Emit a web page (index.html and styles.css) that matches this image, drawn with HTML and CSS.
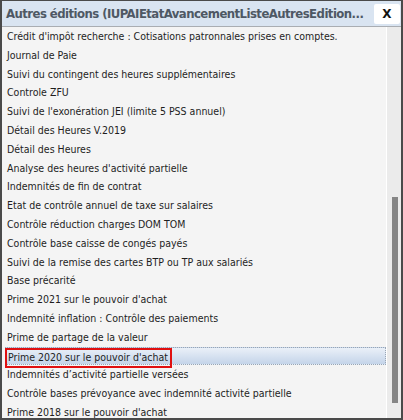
FILE: index.html
```html
<!DOCTYPE html>
<html lang="fr">
<head>
<meta charset="utf-8">
<link rel="stylesheet" href="styles.css">
</head>
<body>
<div class="window">
  <div class="titlebar">
    <div class="title">Autres éditions (IUPAIEtatAvancementListeAutresEdition...</div>
    <div class="close">X</div>
  </div>
  <div class="content">
    <ul class="list">
      <li class="row">Crédit d'impôt recherche : Cotisations patronnales prises en comptes.</li>
      <li class="row">Journal de Paie</li>
      <li class="row">Suivi du contingent des heures supplémentaires</li>
      <li class="row">Controle ZFU</li>
      <li class="row">Suivi de l'exonération JEI (limite 5 PSS annuel)</li>
      <li class="row">Détail des Heures V.2019</li>
      <li class="row">Détail des Heures</li>
      <li class="row">Analyse des heures d'activité partielle</li>
      <li class="row">Indemnités de fin de contrat</li>
      <li class="row">Etat de contrôle annuel de taxe sur salaires</li>
      <li class="row">Contrôle réduction charges DOM TOM</li>
      <li class="row">Contrôle base caisse de congés payés</li>
      <li class="row">Suivi de la remise des cartes BTP ou TP aux salariés</li>
      <li class="row">Base précarité</li>
      <li class="row">Prime 2021 sur le pouvoir d'achat</li>
      <li class="row">Indemnité inflation : Contrôle des paiements</li>
      <li class="row">Prime de partage de la valeur</li>
      <li class="row selected"><span class="mark">Prime 2020 sur le pouvoir d'achat</span></li>
      <li class="row">Indemnités d’activité partielle versées</li>
      <li class="row">Contrôle bases prévoyance avec indemnité activité partielle</li>
      <li class="row">Prime 2018 sur le pouvoir d'achat</li>
    </ul>
    <div class="scrollbar"><div class="thumb"></div></div>
  </div>
</div>
</body>
</html>
```

FILE: styles.css
```css
html, body {
  margin: 0;
  padding: 0;
  background: #ffffff;
}

.window {
  width: 403px;
  height: 420px;
  box-sizing: border-box;
  border: 2px solid #4a4a4a;
  border-top-width: 1px;
  display: flex;
  flex-direction: column;
  background: #f4f4f4;
  overflow: hidden;
  font-family: "DejaVu Sans Condensed", "DejaVu Sans", sans-serif;
}

.titlebar {
  height: 25px;
  flex: none;
  background: #d9e4f1;
  border-bottom: 1px solid #a9adb2;
  display: flex;
  align-items: center;
  justify-content: space-between;
  padding-left: 4px;
  padding-right: 1px;
}

.title {
  flex: none;
  font-weight: bold;
  font-size: 13px;
  letter-spacing: -0.55px;
  color: #4e5864;
  white-space: nowrap;
}

.close {
  flex: none;
  width: 26px;
  height: 20px;
  background: #ffffff;
  border-radius: 2px;
  display: flex;
  align-items: center;
  justify-content: center;
  font-family: "DejaVu Sans", sans-serif;
  font-weight: bold;
  font-size: 12px;
  color: #111;
}

.content {
  flex: 1;
  display: flex;
  min-height: 0;
}

.list {
  flex: 1;
  list-style: none;
  margin: 0;
  padding: 0 0 0 3px;
}

.row {
  height: 18.8px;
  line-height: 18.8px;
  padding-left: 2px;
  font-size: 10.5px;
  color: #1e1e1e;
  white-space: nowrap;
  box-sizing: border-box;
}

.row.selected {
  background: linear-gradient(#eaf0f8, #c4d4e9);
  border: 1px dotted #9aa6b4;
  line-height: 16.8px;
  padding-left: 1px;
}

.mark {
  display: inline-block;
  border: 2px solid #e01010;
  line-height: 15px;
  padding: 0 2px 1px 1px;
  margin-left: -2px;
}

.scrollbar {
  flex: none;
  width: 15px;
  border-left: 1px solid #ffffff;
  background: #ebebeb;
  padding-left: 5px;
  box-sizing: border-box;
  padding-top: 170px;
}

.thumb {
  width: 6px;
  height: 206px;
  background: #858585;
}
```
